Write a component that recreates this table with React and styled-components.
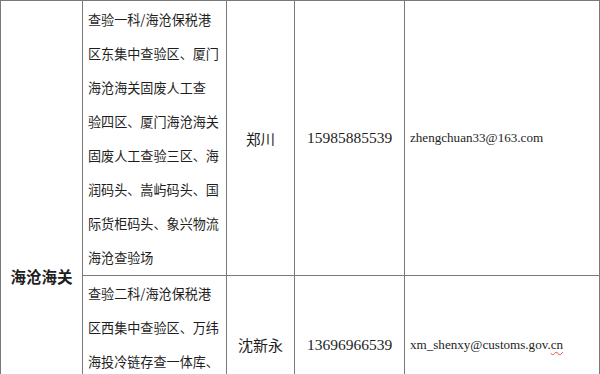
import React from "react";
import styled, { createGlobalStyle } from "styled-components";

const Global = createGlobalStyle`
  html, body { margin: 0; padding: 0; background: #fff; }
  body { overflow: hidden; }
`;

const Table = styled.table`
  border-collapse: collapse;
  table-layout: fixed;
  width: 599px;
  color: #1e1e1e;
`;

const Col = styled.col`
  width: ${(p) => p.$w}px;
`;

const Cell = styled.td`
  border: 1px solid #7a7a7a;
  padding: ${(p) => p.$pad || "0"};
  vertical-align: middle;
  text-align: ${(p) => p.$align || "center"};
  font-family: ${(p) =>
    p.$serif
      ? '"Liberation Serif", "Times New Roman", serif'
      : '"Noto Sans CJK SC", "Noto Sans", sans-serif'};
  font-size: ${(p) => p.$size || 13}px;
  font-weight: ${(p) => (p.$bold ? 700 : 400)};
  line-height: ${(p) => p.$lh || "normal"};
  white-space: nowrap;
`;

const Line = styled.span`
  display: block;
  height: 34px;
  line-height: 34px;
`;

const Spell = styled.span`
  text-decoration: underline wavy #e05050;
  text-decoration-thickness: 1px;
  text-underline-offset: 2px;
`;

const rows = [
  {
    lines: [
      "查验一科/海沧保税港",
      "区东集中查验区、厦门",
      "海沧海关固废人工查",
      "验四区、厦门海沧海关",
      "固废人工查验三区、海",
      "润码头、嵩屿码头、国",
      "际货柜码头、象兴物流",
      "海沧查验场",
    ],
    name: "郑川",
    nameSize: 14.5,
    phone: "15985885539",
    email: <>zhengchuan33@163.com</>,
    padTop: 2,
  },
  {
    lines: [
      "查验二科/海沧保税港",
      "区西集中查验区、万纬",
      "海投冷链存查一体库、",
      "海天码头查验场",
    ],
    name: "沈新永",
    nameSize: 15,
    phone: "13696966539",
    email: (
      <>
        xm_shenxy@customs.gov.<Spell>cn</Spell>
      </>
    ),
    padTop: 1,
  },
  {
    lines: [
      "查验三科/海沧港区",
      "远海码头、新海达码",
      "头、海隆码头查验场",
      "及相关监管作业场所",
    ],
    name: "林志强",
    nameSize: 15,
    phone: "13906038812",
    email: <>xm_linzq@customs.gov.cn</>,
    padTop: 1,
  },
];

export default function App() {
  return (
    <>
      <Global />
      <Table>
        <colgroup>
          <Col $w={82} />
          <Col $w={144} />
          <Col $w={68} />
          <Col $w={110} />
          <Col $w={195} />
        </colgroup>
        <tbody>
          {rows.map((r, i) => (
            <tr key={i}>
              {i === 0 && (
                <Cell rowSpan={rows.length} $size={15.5} $bold>
                  海沧海关
                </Cell>
              )}
              <Cell
                $align="left"
                $pad={`${r.padTop}px 4px 0 5px`}
                $size={13.1}
              >
                {r.lines.map((l, j) => (
                  <Line key={j}>{l}</Line>
                ))}
              </Cell>
              <Cell $size={r.nameSize}>{r.name}</Cell>
              <Cell $serif $size={15.5}>
                {r.phone}
              </Cell>
              <Cell $serif $align="left" $pad="0 4px 0 5px" $size={13.1}>
                {r.email}
              </Cell>
            </tr>
          ))}
        </tbody>
      </Table>
    </>
  );
}
